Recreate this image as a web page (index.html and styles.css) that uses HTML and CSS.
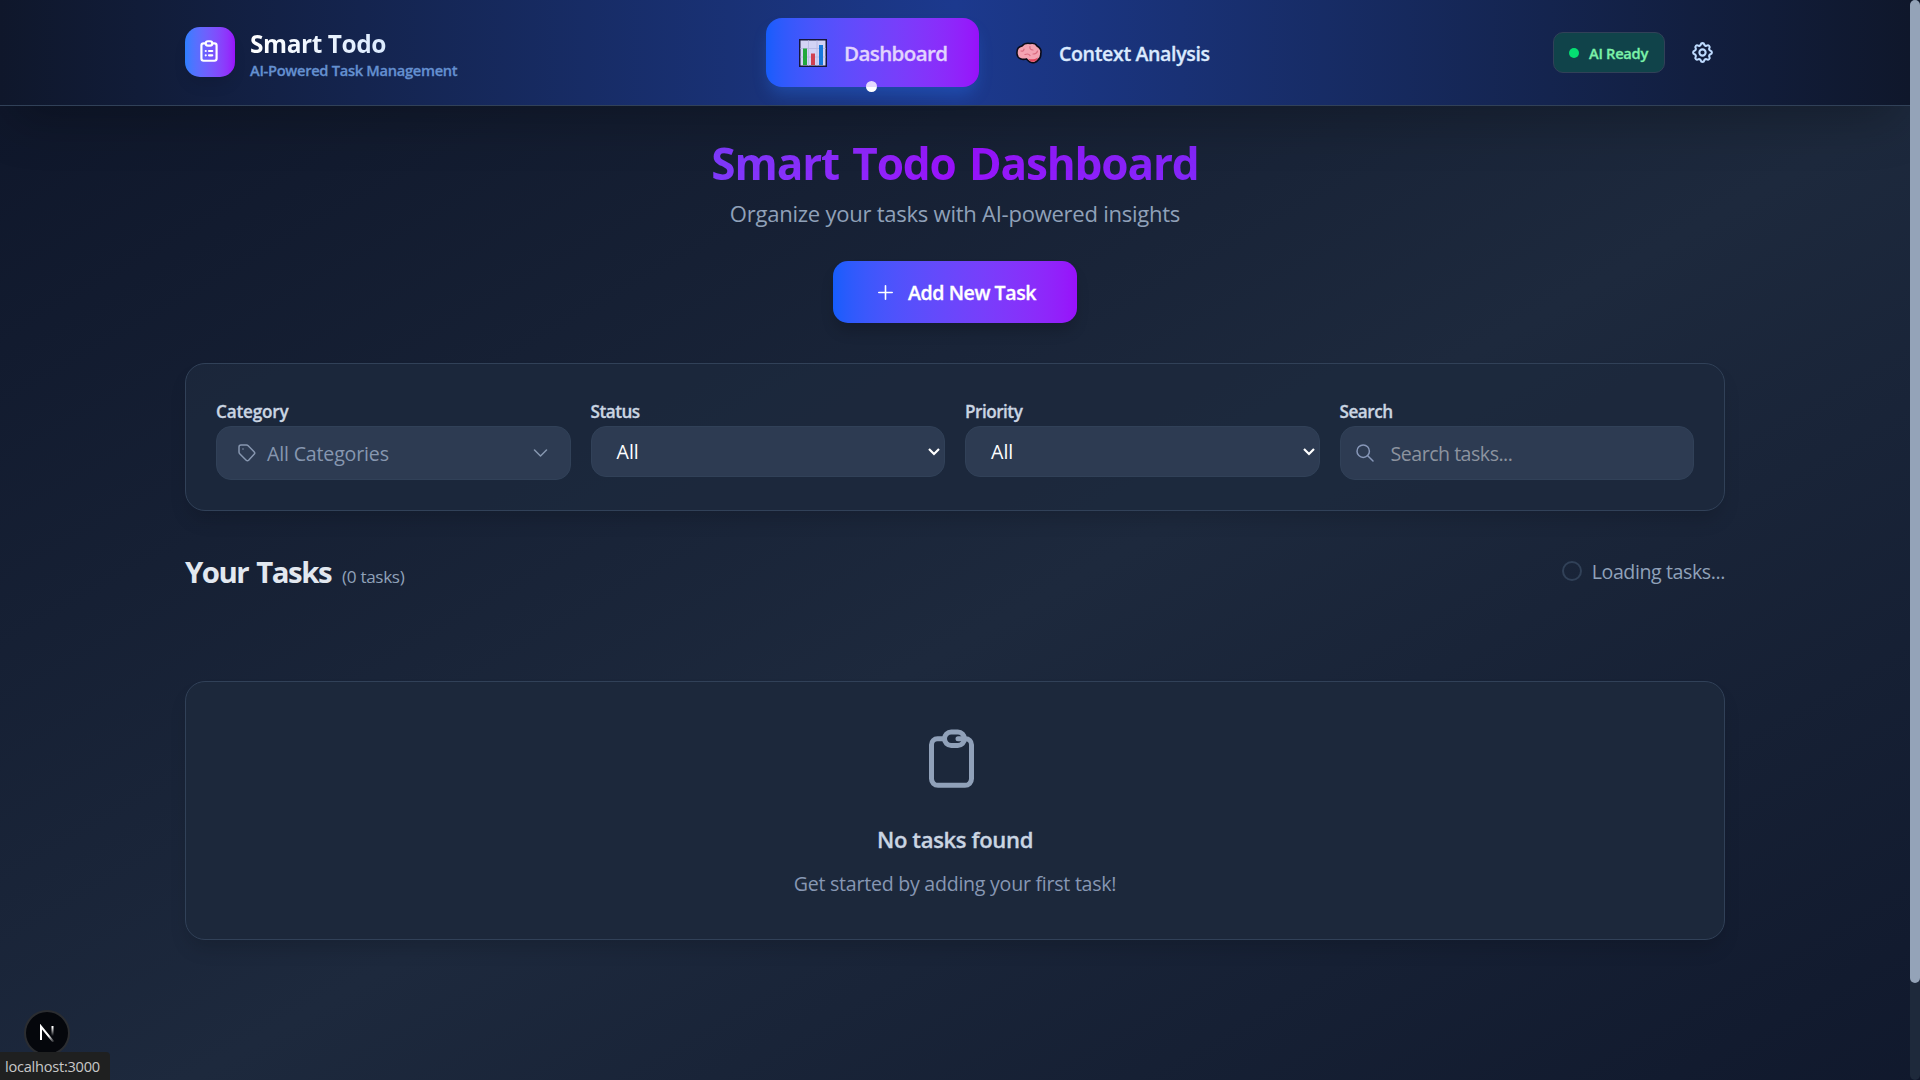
FILE: index.html
```html
<!DOCTYPE html>
<html lang="en">
<head>
<meta charset="utf-8">
<title>Smart Todo</title>
<link rel="stylesheet" href="styles.css">
</head>
<body>
<div class="window">
  <div class="page">
    <header class="header">
      <div class="brand">
        <div class="logo">
          <svg width="26" height="26" viewBox="0 0 24 24" fill="none" stroke="#fff" stroke-width="2" stroke-linecap="round" stroke-linejoin="round"><path d="M9 5H7a2 2 0 00-2 2v12a2 2 0 002 2h10a2 2 0 002-2V7a2 2 0 00-2-2h-2M9 5a2 2 0 002 2h2a2 2 0 002-2M9 5a2 2 0 012-2h2a2 2 0 012 2m-3 7h3m-3 4h3m-6-4h.01M9 16h.01"/></svg>
        </div>
        <div class="brand-text">
          <span class="brand-name">Smart Todo</span>
          <span class="brand-tag">AI-Powered Task Management</span>
        </div>
      </div>
      <nav class="nav">
        <a class="nav-item active">
          <svg width="28" height="28" viewBox="0 0 28 28"><rect x=".75" y=".75" width="26.5" height="26.5" fill="#d3d3f5" stroke="#15163a" stroke-width="1.5"/><path d="M1.5 9.5h25M1.5 18h25M9.5 1.500v25M18 1.500v25" stroke="#bcbce6" stroke-width="1"/><path d="M4 9.500h4v16.500h-4z" fill="#22a83c"/><path d="M12 14.500h4v11.500h-4z" fill="#d04050"/><path d="M20 6h4v20h-4z" fill="#1677dc"/></svg>
          <span>Dashboard</span>
          <i class="nav-dot"></i>
        </a>
        <a class="nav-item">
          <svg width="26" height="22" viewBox="0 0 26 22"><path d="M1 12C.5 7 3 4.500 6 4 8 1.500 11 1 14 1.500c3-.7 6 .5 7 2.500 3 1.500 4.500 4.500 3.800 7.500.2 3-.8 5-2.800 6.500-1.500 2.500-5 3.500-8 2-1.500-.6-2.500-2-3.500-3C6.500 18 1.500 17 1 12z" fill="#f4a3b2" stroke="#0b0b18" stroke-width="1.600"/><path d="M12.500 17c3 .8 7 .3 9.500-1.500-.8 3-3.500 4.600-6.500 4.200-1.300-.3-2.300-1.300-3-2.700z" fill="#e0455c"/><path d="M5 9c2 .5 3-.5 3-2M9 12.500c2.500-1 4-.5 5 1M14 4.500c-.5 2 .5 3.500 3 3.500M17 12c2 0 4-1 4.500-3" fill="none" stroke="#d96c80" stroke-width="1.200" stroke-linecap="round"/></svg>
          <span class="nav-label">Context Analysis</span>
        </a>
      </nav>
      <div class="tools">
        <div class="ready"><i class="ready-dot"></i><span>AI Ready</span></div>
        <svg width="25" height="25" viewBox="0 0 24 24" fill="none" stroke="#bedbff" stroke-width="2" stroke-linecap="round" stroke-linejoin="round"><path d="M10.325 4.317c.426-1.756 2.924-1.756 3.350 0a1.724 1.724 0 002.573 1.066c1.543-.94 3.310.826 2.370 2.370a1.724 1.724 0 001.065 2.572c1.756.426 1.756 2.924 0 3.350a1.724 1.724 0 00-1.066 2.573c.94 1.543-.826 3.310-2.370 2.370a1.724 1.724 0 00-2.572 1.065c-.426 1.756-2.924 1.756-3.350 0a1.724 1.724 0 00-2.573-1.066c-1.543.94-3.310-.826-2.370-2.370a1.724 1.724 0 00-1.065-2.572c-1.756-.426-1.756-2.924 0-3.350a1.724 1.724 0 001.066-2.573c-.94-1.543.826-3.310 2.370-2.370.996.608 2.296.07 2.572-1.065z"/><path d="M15 12a3 3 0 11-6 0 3 3 0 016 0z"/></svg>
      </div>
    </header>
    <main class="main">
      <section class="hero">
        <h1 class="title"><span>Smart Todo Dashboard</span></h1>
        <p class="subtitle">Organize your tasks with AI-powered insights</p>
        <button class="add"><svg width="15" height="15" viewBox="0 0 15 15" fill="none" stroke="#fff" stroke-width="1.600" stroke-linecap="round"><path d="M7.500.8v13.400M.8 7.500h13.400"/></svg><span>Add New Task</span></button>
      </section>
      <section class="filters card">
        <div class="field">
          <label class="label label-category">Category</label>
          <div class="control muted category">
            <svg width="18" height="18" viewBox="0 0 18 18" fill="none" stroke="currentColor" stroke-width="1.500" stroke-linejoin="round" stroke-linecap="round"><path d="M3 1h5.500q1 0 1.700.7l5.900 6q1.300 1.300 0 2.600l-5.500 5.900q-1.200 1.200-2.400 0L1.700 9.700Q1 9 1 8V3q0-2 2-2z"/><path d="M5 5h.01"/></svg>
            <span class="category-text">All Categories</span>
            <svg class="push" width="15" height="9" viewBox="0 0 15 9" fill="none" stroke="currentColor" stroke-width="1.500" stroke-linecap="round" stroke-linejoin="round"><path d="M1.500 1l6 6 6-6"/></svg>
          </div>
        </div>
        <div class="field">
          <label class="label">Status</label>
          <div class="control select"><span>All</span><svg class="push" width="12" height="8" viewBox="0 0 12 8" fill="none" stroke="#fff" stroke-width="2.200"><path d="M1 1l5 5 5-5"/></svg></div>
        </div>
        <div class="field">
          <label class="label">Priority</label>
          <div class="control select"><span>All</span><svg class="push" width="12" height="8" viewBox="0 0 12 8" fill="none" stroke="#fff" stroke-width="2.200"><path d="M1 1l5 5 5-5"/></svg></div>
        </div>
        <div class="field">
          <label class="label">Search</label>
          <div class="control search">
            <svg width="18" height="18" viewBox="0 0 18 18" fill="none" stroke="#8797b8" stroke-width="1.500" stroke-linecap="round"><circle cx="7.200" cy="7.200" r="6.200"/><path d="M11.700 11.700l5.300 5.300"/></svg>
            <span>Search tasks...</span>
          </div>
        </div>
      </section>
      <section class="list-head">
        <h2 class="list-title">Your Tasks</h2>
        <span class="count">(0 tasks)</span>
        <div class="loading"><i class="spinner"></i><span>Loading tasks...</span></div>
      </section>
      <section class="empty card">
        <svg class="empty-icon" width="54" height="60" viewBox="0 0 54 60" fill="none" stroke="#90a1b9" stroke-width="5" stroke-linecap="round" stroke-linejoin="round"><path d="M17 9.800h-6.500a6 6 0 00-6 6v34a6.500 6.500 0 006.500 6.500h27a6.500 6.500 0 006.500-6.500v-34a6 6 0 00-6-6h-7.500"/><rect x="17.500" y="3" width="20" height="13.500" rx="6.700"/></svg>
        <h3 class="empty-title">No tasks found</h3>
        <p class="empty-text">Get started by adding your first task!</p>
      </section>
    </main>
  </div>
  <div class="scrollbar"><div class="thumb"></div></div>
  <div class="dev-badge">
    <svg width="18" height="18" viewBox="0 0 18 18" fill="none" stroke-width="2"><defs><linearGradient id="a" x1="0" y1="0" x2="1" y2="1"><stop offset=".6" stop-color="#fff"/><stop offset="1" stop-color="#fff" stop-opacity=".1"/></linearGradient><linearGradient id="b" gradientUnits="userSpaceOnUse" x1="0" y1="1" x2="0" y2="12"><stop offset=".2" stop-color="#fff"/><stop offset="1" stop-color="#fff" stop-opacity="0"/></linearGradient></defs><path d="M3 16V2.500L15.500 18" stroke="url(#a)"/><path d="M14.500 2v10" stroke="url(#b)"/></svg>
  </div>
  <div class="status">localhost:3000</div>
</div>
</body>
</html>
```
FILE: styles.css
```css
* { box-sizing: border-box; margin: 0; padding: 0; }
body { font-family: "Open Sans", "Noto Sans", sans-serif; font-size: 19.6px; overflow: hidden; background: #0f172a; }
svg { display: block; flex: none; }

.window { position: relative; display: flex; width: 1920px; height: 1080px; overflow: hidden; }
.page { width: 1910px; height: 1080px; overflow: hidden; }

.header {
  position: relative; z-index: 1; height: 106px; padding: 0 185px;
  display: grid; grid-template-columns: 581px 1fr auto; align-items: center;
  background: linear-gradient(to right in oklab, #0f172b, #1c398e, #0f172b);
  border-bottom: 1px solid #314158;
  box-shadow: 0 25px 50px -12px rgba(0, 0, 0, .25);
}
.brand { display: flex; align-items: center; gap: 15px; padding-bottom: 1px; }
.logo { width: 50px; height: 50px; border-radius: 15px; display: flex; align-items: center; justify-content: center; padding: 0 3px 3px 0; background: linear-gradient(to right in oklab, #2b7fff, #9810fa); box-shadow: 0 10px 15px -3px rgba(0, 0, 0, .1); }
.brand-text { display: flex; flex-direction: column; padding-top: 4px; }
.brand-name { font-size: 24.5px; font-weight: 700; line-height: 32px; letter-spacing: -.45px; width: max-content; color: transparent; background: linear-gradient(to right, #fff, #dbeafe); background-clip: text; -webkit-background-clip: text; }
.brand-tag { font-size: 14.7px; font-weight: 600; line-height: 20px; letter-spacing: -.31px; color: #6490d0; }
.brand-tag, .nav-item, .ready, .add, .label, .empty-title { -webkit-text-stroke: .3px currentColor; }

.nav { display: flex; align-items: center; gap: 37px; }
.nav-item { position: relative; display: flex; align-items: center; gap: 17px; font-weight: 600; letter-spacing: -.38px; color: #dbeafe; }
.nav-item.active { width: 213px; height: 69px; padding-left: 33px; border-radius: 16px; font-size: 20.6px; letter-spacing: -.64px; color: #e1d4fe; background: linear-gradient(to right in oklab, #155dfc, #9810fa); box-shadow: 0 10px 16px -3px rgba(43, 127, 255, .3); }
.nav-label { padding-top: 2px; }
.nav-dot { position: absolute; left: 100px; bottom: -5px; width: 11px; height: 11px; border-radius: 50%; background: linear-gradient(#e4d8fe 52%, #fff 52%); }

.tools { display: flex; align-items: center; gap: 25px; padding-right: 10px; }
.ready { display: flex; align-items: center; gap: 10px; width: 112px; height: 41px; padding-left: 15px; border: 1px solid #314158; border-radius: 10px; background: #10434a; color: #7bf1a8; font-size: 14.7px; font-weight: 600; letter-spacing: -.3px; }
.ready-dot { width: 10px; height: 10px; border-radius: 50%; background: #05df72; }

.main { height: 1080px; padding: 29px 185px 0; background: linear-gradient(to bottom right in oklab, #0f172b, #1d293d, #0f172b); }
.hero { display: flex; flex-direction: column; align-items: center; }
.title { width: 100%; text-align: center; font-size: 44.1px; line-height: 56px; font-weight: 700; letter-spacing: -1.15px; word-spacing: 3px; color: transparent; background: linear-gradient(110deg in oklab, #155dfc, #9810fa, #4f39f6); background-clip: text; -webkit-background-clip: text; }
.subtitle { margin-top: 6px; font-size: 22.05px; line-height: 32px; letter-spacing: -.26px; color: #90a1b9; }
.add { margin-top: 32px; width: 244px; height: 62px; border: 0; border-radius: 15px; display: flex; align-items: center; justify-content: center; gap: 15px; padding-left: 4px; color: #fff; font: 600 19.6px "Open Sans", sans-serif; letter-spacing: -.44px; background: linear-gradient(to right in oklab, #155dfc, #9810fa); box-shadow: 0 10px 15px -3px rgba(0, 0, 0, .2); }

.card { border: 1px solid #314158; border-radius: 20px; background: #1c283b; box-shadow: 0 12px 19px -4px rgba(0, 0, 0, .15); }
.filters { margin-top: 40px; height: 148px; padding: 35px 30px 0; display: grid; grid-template-columns: repeat(4, 1fr); gap: 20px; background: rgba(29, 41, 61, .8); }
.field { display: flex; flex-direction: column; }
.label { font-size: 17.15px; line-height: 25px; height: 27px; font-weight: 600; letter-spacing: -.5px; color: #cad5e2; }
.label-category { letter-spacing: -.2px; }
.control { display: flex; align-items: center; height: 54px; border: 1px solid #314158; border-radius: 15px; background: #2d3b52; }
.push { margin-left: auto; }
.muted { color: #8797b0; }
.category { padding: 0 22px 0 21px; gap: 11px; letter-spacing: -.18px; }
.select { height: 51px; padding: 0 4px 0 25px; color: #fff; }
.search { padding-left: 15px; gap: 17px; letter-spacing: -.5px; color: #8c939f; }

.list-head { margin-top: 39px; height: 44px; display: flex; align-items: baseline; }
.list-title { font-size: 29.4px; line-height: 44px; font-weight: 700; letter-spacing: -1.5px; word-spacing: 2px; color: #e2e8f0; }
.count { margin-left: 11px; font-size: 17.15px; letter-spacing: -.33px; color: #90a1b9; }
.loading { margin-left: auto; align-self: center; display: flex; align-items: center; gap: 10px; letter-spacing: -.41px; color: #90a1b9; padding-bottom: 2px; }
.spinner { width: 20px; height: 20px; border: 2px solid #314158; border-radius: 50%; }

.empty { margin-top: 87px; height: 259px; padding-top: 47px; display: flex; flex-direction: column; align-items: center; }
.empty-icon { margin-right: 3px; }
.empty-title { margin-top: 33px; font-size: 22.05px; line-height: 34px; font-weight: 600; letter-spacing: -.35px; color: #cad5e2; }
.empty-text { margin-top: 13px; line-height: 30px; letter-spacing: -.26px; color: #8797b3; }

.scrollbar { width: 10px; height: 1080px; background: #1e293b; border-radius: 5px; }
.thumb { height: 983px; border-radius: 5px; background: #94a3b8; }

.dev-badge { position: absolute; left: 24px; top: 1010px; width: 46px; height: 46px; border-radius: 50%; border: 2px solid #2b2d31; background: #05070c; display: flex; align-items: center; justify-content: center; }
.status { position: absolute; left: 0; bottom: 0; width: 110px; height: 28px; padding-left: 5px; border-radius: 0 4px 0 0; background: #1f2020; color: #c8c8c8; font-size: 14.6px; line-height: 28px; letter-spacing: -.25px; }
```
